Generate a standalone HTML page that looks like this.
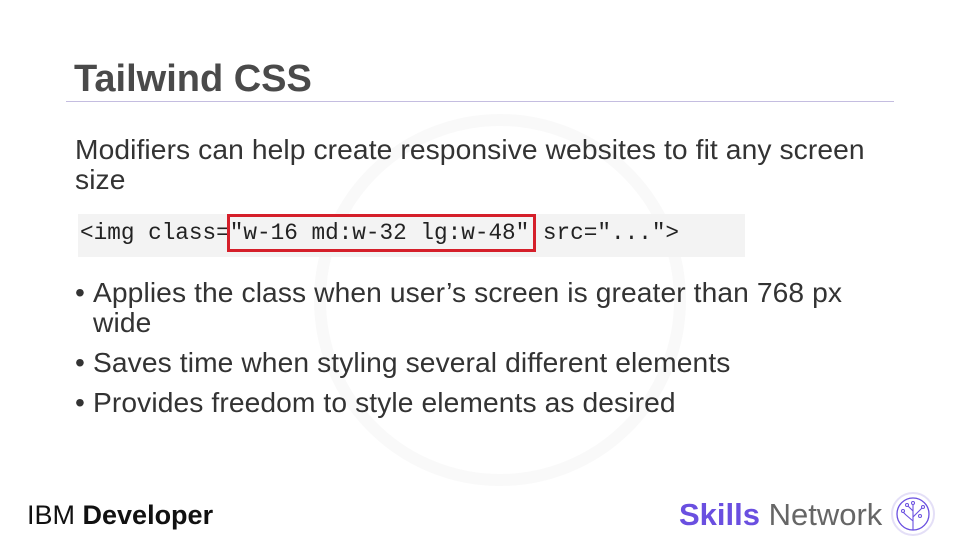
<!DOCTYPE html>
<html><head><meta charset="utf-8"><style>
body{margin:0;width:960px;height:540px;background:#fff;position:relative;overflow:hidden;font-family:"Liberation Sans",sans-serif;color:#333}
.a{position:absolute;white-space:nowrap}
h1{position:absolute;left:74px;top:58px;margin:0;font-size:38px;font-weight:bold;color:#4a4a4a}
.line{position:absolute;left:66px;top:101px;width:828px;height:1px;background:#c4bde0}
.p{font-size:28.2px;color:#333;line-height:30px;letter-spacing:0.1px}
.code{position:absolute;left:78px;top:214px;width:667px;height:43px;background:#f3f3f3}
.ct{position:absolute;left:80px;top:220px;font-family:"Liberation Mono",monospace;font-size:22.7px;color:#222;white-space:pre}
.red{position:absolute;left:227px;top:214px;width:303px;height:32px;border:3px solid #d51f2a}
</style></head><body>
<svg class="a" style="left:300px;top:110px" width="400" height="380"><circle cx="200" cy="190" r="180" fill="none" stroke="#f9f9f9" stroke-width="12"/></svg>
<h1>Tailwind CSS</h1>
<div class="line"></div>
<div class="a p" style="left:75px;top:134px">Modifiers can help create responsive websites to fit any screen<br>size</div>
<div class="code"></div>
<div class="ct">&lt;img class="w-16 md:w-32 lg:w-48" src="..."&gt;</div>
<div class="red"></div>
<div class="a p" style="left:75px;top:277px">•</div>
<div class="a p" style="left:93px;top:277px">Applies the class when user’s screen is greater than 768 px<br>wide</div>
<div class="a p" style="left:75px;top:347px">•</div>
<div class="a p" style="left:93px;top:347px">Saves time when styling several different elements</div>
<div class="a p" style="left:75px;top:387px">•</div>
<div class="a p" style="left:93px;top:387px">Provides freedom to style elements as desired</div>
<div class="a" style="left:27px;top:500px;font-size:27px;color:#111">IBM <b>Developer</b></div>
<div class="a" style="left:679px;top:497px;font-size:31px;color:#666"><b style="color:#6a4fe0">Skills</b> Network</div>
<svg class="a" style="left:890px;top:491px" width="46" height="46" viewBox="0 0 46 46"><circle cx="23" cy="23" r="21" fill="none" stroke="#e4dff7" stroke-width="2"/><circle cx="23" cy="23" r="16" fill="none" stroke="#6a4fe0" stroke-width="1.3"/><path d="M23 39V14M23 30l-7-6M23 26l6-6M23 20l-5-5M16 24l-3-3M29 20l3-3" stroke="#6a4fe0" stroke-width="1.1" fill="none"/><g fill="none" stroke="#6a4fe0"><circle cx="23" cy="12" r="1.5"/><circle cx="13" cy="20" r="1.5"/><circle cx="33" cy="16" r="1.5"/><circle cx="17" cy="14" r="1.5"/><circle cx="30" cy="25" r="1.5"/></g></svg>
</body></html>
